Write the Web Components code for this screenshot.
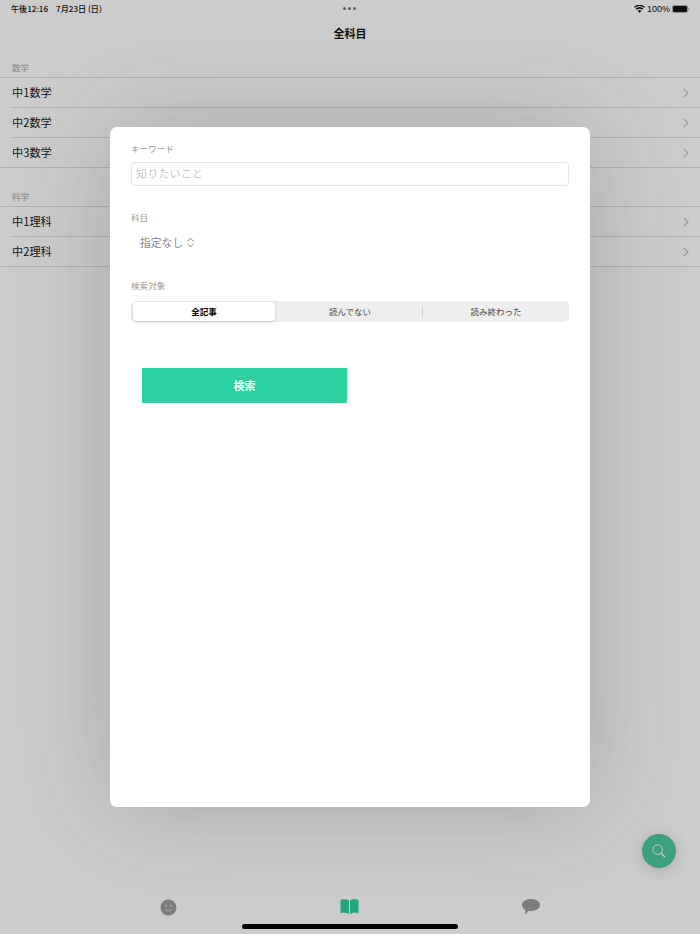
<!DOCTYPE html>
<html lang="ja"><head><meta charset="utf-8"><title>全科目</title>
<style>
html,body{margin:0;padding:0;background:#fff}
body{font-family:"Noto Sans CJK JP","Liberation Sans",sans-serif}
</style></head><body>
<app-screen>
  <status-bar slot="status"></status-bar>
  <nav-title slot="nav">全科目</nav-title>
  <list-section slot="list" title="数学">
    <list-row>中1数学</list-row><list-row>中2数学</list-row><list-row last>中3数学</list-row>
  </list-section>
  <list-section slot="list" title="科学">
    <list-row>中1理科</list-row><list-row last>中2理科</list-row>
  </list-section>
  <tab-bar slot="tabs"></tab-bar>
  <fab-search slot="fab"></fab-search>
  <search-modal slot="modal"></search-modal>
</app-screen>
<script>
function def(name,html){
  customElements.define(name,class extends HTMLElement{
    connectedCallback(){
      if(this.shadowRoot)return;
      const r=this.attachShadow({mode:'open'});
      r.innerHTML=typeof html==='function'?html(this):html;
    }
  });
}
def('app-screen',`<style>
:host{display:block;position:relative;width:700px;height:934px;overflow:hidden;background:#fff}
.page{display:flex;flex-direction:column;height:100%}
.list{flex:1}
.scrim{position:absolute;inset:0;background:rgba(0,0,0,.2)}
.indicator{position:absolute;left:242px;bottom:5px;width:216px;height:5px;border-radius:3px;background:#000}
</style>
<div class="page"><slot name="status"></slot><slot name="nav"></slot><div class="list"><slot name="list"></slot></div><slot name="tabs"></slot></div>
<slot name="fab"></slot>
<div class="scrim"></div>
<slot name="modal"></slot>
<div class="indicator"></div>`);
def('status-bar',`<style>
:host{display:flex;align-items:center;justify-content:space-between;height:17px;padding:0 10px 0 11px;font:500 8.100px "Noto Sans CJK JP","Liberation Sans",sans-serif;color:#111;position:relative}
.dots{position:absolute;left:343px;top:7px;display:flex;gap:2px}
.dots i{width:3px;height:3px;border-radius:50%;background:#777}
.r{display:flex;align-items:center;gap:2px}
.l span{margin-left:8px}
</style>
<div class="l">午後12:16<span>7月23日 (日)</span></div>
<div class="dots"><i></i><i></i><i></i></div>
<div class="r">
<svg width="11" height="8" viewBox="0 0 11 8"><path d="M5.500 8 3.600 5.700a3 3 0 0 1 3.800 0zM2.700 4.800 1.600 3.600a6 6 0 0 1 7.800 0L8.300 4.800a4.400 4.400 0 0 0-5.600 0zM.9 2.800 0 1.900a8 8 0 0 1 11 0l-.9.900a6.800 6.800 0 0 0-9.200 0z" fill="#111"/></svg>
<span style="font-family:'Liberation Sans',sans-serif;font-size:9px">100%</span>
<svg width="18" height="8" viewBox="0 0 18 8"><rect x=".4" y=".4" width="15.200" height="7.200" rx="1.800" fill="none" stroke="#888" stroke-width=".7"/><rect x="1" y="1" width="14" height="6" rx="1.200" fill="#111"/><path d="M16.500 2.800c.7.200 1 .7 1 1.200s-.3 1-1 1.200z" fill="#888"/></svg>
</div>`);
def('nav-title',`<style>
:host{display:block;height:33px;text-align:center;font:700 11px/33px "Noto Sans CJK JP",sans-serif;color:#111}
</style><slot></slot>`);
def('list-section',h=>`<style>
:host{display:block}
.h{height:28px;box-sizing:border-box;padding:10px 12px 0;font:400 8.500px/14px "Noto Sans CJK JP",sans-serif;color:#aaa;border-bottom:1px solid #dedede}
.b{border-bottom:1px solid #dedede;margin-bottom:11px}
</style><div class="h">${h.getAttribute('title')}</div><div class="b"><slot></slot></div>`);
def('list-row',h=>`<style>
:host{display:block;padding-left:12px}
.r{display:flex;align-items:center;justify-content:space-between;height:29px;padding-right:11px;font:400 11.200px "Noto Sans CJK JP",sans-serif;color:#222;${h.hasAttribute('last')?'':'border-bottom:1px solid #dedede'}}
span{margin-bottom:2px}
</style><div class="r"><span><slot></slot></span><svg width="6" height="10" viewBox="0 0 6 10"><path d="M.8.8 5 5 .8 9.200" fill="none" stroke="#bdbdbd" stroke-width="1.100"/></svg></div>`);
def('tab-bar',`<style>
:host{display:grid;grid-template-columns:repeat(3,181.500px);justify-content:center;height:54px;box-sizing:border-box;padding:19px 1px 0 0}
div{display:flex;justify-content:center}
svg{display:block}
</style>
<div><svg width="17" height="17" viewBox="0 0 17 17"><circle cx="8.500" cy="8.500" r="8" fill="#9d9d9d"/><circle cx="6" cy="6.500" r="1" fill="#d6d6d6"/><circle cx="11" cy="6.500" r="1" fill="#d6d6d6"/><path d="M5 10.500c1 1.700 6 1.700 7 0" fill="none" stroke="#d6d6d6" stroke-width="1"/></svg></div>
<div><svg width="19" height="15" viewBox="0 0 19 15"><path d="M.5 2C.5 1 1 .7 2 .5 4.500 0 7.500.3 9 1.700V15C7 13.600 3.500 13.400.5 14.200zM18.500 2c0-1-.5-1.300-1.500-1.500C14.500 0 11.500.3 10 1.700V15c2-1.400 5.500-1.600 8.500-.8z" fill="#2bd1a1"/></svg></div>
<div><svg width="18" height="16" viewBox="0 0 18 16"><path d="M9 0c5 0 9 2.500 9 6s-4 6-9 6c-.8 0-1.500-.1-2.200-.2C5.500 13.200 3.800 15 2.800 16c.4-1.300.7-3 .5-5C1.300 9.900 0 8.100 0 6c0-3.500 4-6 9-6z" fill="#9d9d9d"/></svg></div>`);
def('fab-search',`<style>
:host{position:absolute;left:642px;top:834px;width:34px;height:34px;border-radius:50%;background:#4fc8a2;box-shadow:0 2px 16px rgba(0,0,0,.18);display:flex;align-items:center;justify-content:center}
</style><svg width="14" height="14" viewBox="0 0 14 14"><circle cx="5.700" cy="5.700" r="4.800" fill="none" stroke="#fff" stroke-width="1"/><path d="M9.200 9.200 13.200 13.200" stroke="#fff" stroke-width="1.300"/></svg>`);
def('search-modal',`<style>
:host{position:absolute;left:110px;top:127px;width:480px;height:680px;box-sizing:border-box;background:#fff;border-radius:7px;box-shadow:0 0 100px rgba(40,50,40,.24);padding:14px 21px;display:flex;flex-direction:column;font-family:"Noto Sans CJK JP",sans-serif}
.lb{font-size:8.500px;line-height:14px;color:#999;letter-spacing:.1px}
.in{margin-top:7px;height:24px;box-sizing:border-box;border:1px solid #e6e6e6;border-radius:4px;padding-left:4px;font-size:11px;line-height:21px;letter-spacing:.2px;color:#c8c8c8}
.k{margin-top:24px}
.sel{display:flex;align-items:center;gap:3px;height:24px;margin-top:6px;padding-left:9px;font-size:10.800px;color:#888}
.t{margin-top:24px}
.seg{margin-top:9px;height:21px;border-radius:5px;background:#eee;display:grid;grid-template-columns:1fr 1fr 1fr;font-size:8.500px;line-height:20px;text-align:center;color:#444;position:relative}
.seg div{position:relative}
.on{margin:1px 2px;line-height:18px;background:#fff;border-radius:4px;box-shadow:0 1px 3px rgba(0,0,0,.2);font-weight:700;color:#000}
.d::after{content:"";position:absolute;right:0;top:5px;height:12px;width:1px;background:#d6d6d6}
.go{margin:46px 0 0 11px;width:205px;height:35px;background:#2bd1a1;color:#fff;font-size:11px;font-weight:700;line-height:34px;text-align:center}
</style>
<div class="lb">キーワード</div>
<div class="in">知りたいこと</div>
<div class="lb k">科目</div>
<div class="sel">指定なし<svg width="9" height="11" viewBox="0 0 9 11"><path d="M1.500 4.300 4.500 1.200l3 3.100M1.500 6.700l3 3.100 3-3.100" fill="none" stroke="#808080" stroke-width="1"/></svg></div>
<div class="lb t">検索対象</div>
<div class="seg"><div class="on">全記事</div><div class="d">読んでない</div><div>読み終わった</div></div>
<div class="go">検索</div>`);
</script>
</body></html>
